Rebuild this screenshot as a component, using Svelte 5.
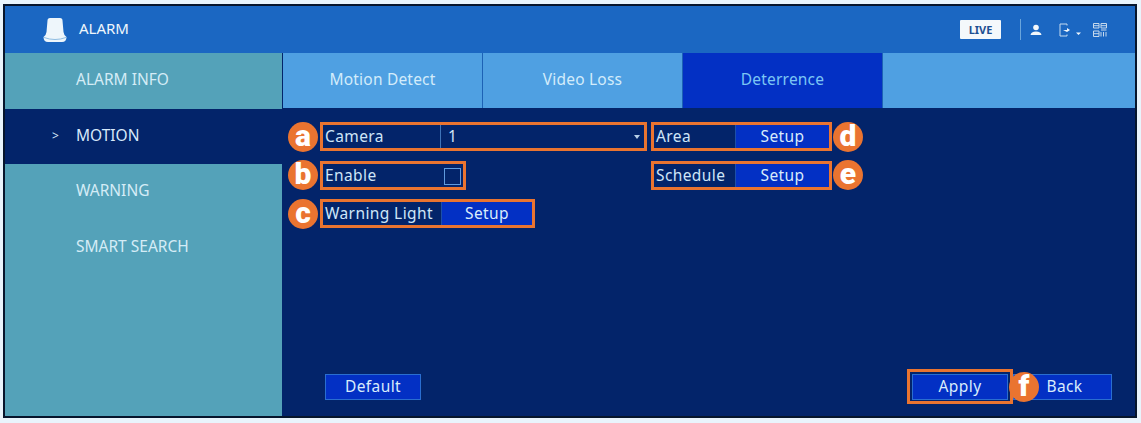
<script>
	const menu = [
		{ label: 'ALARM INFO' },
		{ label: 'MOTION', active: true },
		{ label: 'WARNING' },
		{ label: 'SMART SEARCH' }
	];
	const tabs = [
		{ label: 'Motion Detect' },
		{ label: 'Video Loss' },
		{ label: 'Deterrence', active: true }
	];
</script>

<div class="frame">
	<header class="topbar">
		<div class="brand">
			<svg class="bell" width="24" height="26" viewBox="0 0 24 26">
				<path d="M4.500 3.500 Q4.500 1 7 1 H17 Q19.500 1 19.500 3.500 L20.500 15 Q20.800 18 23.500 20 Q23.500 25 19 25 H5 Q0.500 25 0.500 20 Q3.200 18 3.500 15 Z" fill="#eef6fb" />
				<path d="M1 20.500 Q12 24.500 23 20.500" fill="none" stroke="#8fbde2" stroke-width="1" />
			</svg>
			<span>ALARM</span>
		</div>
		<div class="tools">
			<span class="live">LIVE</span>
			<span class="sep"></span>
			<svg width="12" height="12" viewBox="0 0 12 12">
				<circle cx="6" cy="3.500" r="2.800" fill="#f2f7fb" />
				<path d="M0.500 11 Q1 7.500 6 7.500 Q11 7.500 11.500 11 Z" fill="#f2f7fb" />
			</svg>
			<svg class="exit" width="23" height="14" viewBox="0 0 23 14">
				<path d="M8 2.500 V1 H1 V13 H8 V11.500" fill="none" stroke="#c6dcf0" stroke-width="1" />
				<path d="M4 7 H8 V5 L11 7 L8 9 Z" fill="#f2f7fb" />
				<path d="M17 9.500 H22 L19.500 12 Z" fill="#f2f7fb" />
			</svg>
			<svg class="qr" width="14" height="14" viewBox="0 0 14 14">
				<g fill="none" stroke="#c6d9ec" stroke-width="1">
					<path d="M0.500 0.500 H6 V5 H0.500 Z M8 0.500 H13.500 V5 H8 Z M0.500 8 H6 V13.500 H0.500 Z" />
					<path d="M0.500 2.700 H6 M8 2.700 H13.500 M8 7 H13.500 M8 9 V13.500 M10.500 9 V13.500 M13 9 V13.500 M0.500 10.700 H6" />
				</g>
			</svg>
		</div>
	</header>

	<div class="body">
		<nav class="sidebar">
			{#each menu as item}
				<div class="menu-item" class:active={item.active}>
					{#if item.active}<span class="chevron">&gt;</span>{/if}
					{item.label}
				</div>
			{/each}
		</nav>

		<main class="panel">
			<div class="tabs">
				{#each tabs as tab}
					<div class="tab" class:active={tab.active}>{tab.label}</div>
				{/each}
				<div class="tab filler"></div>
			</div>

			<div class="form">
				<div class="box camera">
					<span class="badge left">a</span>
					<span class="label">Camera</span>
					<span class="select">1<i class="caret"></i></span>
				</div>
				<div class="box area">
					<span class="label">Area</span>
					<span class="setup">Setup</span>
					<span class="badge right">d</span>
				</div>

				<div class="box enable">
					<span class="badge left">b</span>
					<span class="label">Enable</span>
					<span class="check"></span>
				</div>
				<div class="box area">
					<span class="label">Schedule</span>
					<span class="setup">Setup</span>
					<span class="badge right">e</span>
				</div>

				<div class="box light">
					<span class="badge left">c</span>
					<span class="label">Warning Light</span>
					<span class="setup">Setup</span>
				</div>
			</div>

			<div class="actions">
				<button class="btn">Default</button>
				<div class="right-actions">
					<div class="apply-box">
						<button class="btn">Apply</button>
						<span class="badge apply-badge">f</span>
					</div>
					<button class="btn back">Back</button>
				</div>
			</div>
		</main>
	</div>
</div>

<style>
	:global(body) {
		background: #e9f4fc;
	}
	.frame {
		box-sizing: border-box;
		width: 1134px;
		height: 414px;
		margin: 4px 0 0 3px;
		border: 2px solid #06152c;
		display: flex;
		flex-direction: column;
		font-family: 'Noto Sans', 'Open Sans', sans-serif;
		color: #cfe6f8;
		font-size: 15.500px;
		letter-spacing: 0.4px;
	}
	.topbar {
		height: 47px;
		flex: none;
		background: #1b67c2;
		display: flex;
		align-items: center;
		justify-content: space-between;
		padding: 0 28px 0 38px;
	}
	.brand {
		display: flex;
		align-items: center;
		gap: 12px;
		font-size: 15px;
		line-height: 18px;
		color: #f0f7fc;
		letter-spacing: 0;
	}
	.brand span {
		padding-bottom: 3px;
	}
	.tools {
		display: flex;
		align-items: center;
	}
	.live {
		width: 41px;
		height: 19px;
		background: #f4f8fb;
		color: #1c4f92;
		border-radius: 1px;
		font-size: 11px;
		font-weight: 700;
		line-height: 19px;
		text-align: center;
		letter-spacing: 0;
		margin-right: 19px;
	}
	.sep {
		width: 1px;
		height: 21px;
		background: #6aa5dc;
		margin-right: 9px;
	}
	.exit {
		margin-left: 17px;
	}
	.qr {
		margin-left: 11px;
	}
	.body {
		flex: 1;
		display: flex;
		min-height: 0;
	}
	.sidebar {
		width: 277px;
		flex: none;
		background: #54a2b9;
	}
	.menu-item {
		position: relative;
		height: 55.500px;
		line-height: 53px;
		padding-left: 71px;
		font-size: 15.500px;
		color: #d4ecf6;
		letter-spacing: 0;
	}
	.menu-item.active {
		background: #03246a;
		color: #d7e9fa;
	}
	.chevron {
		position: absolute;
		left: 47px;
		font-size: 12px;
	}
	.panel {
		flex: 1;
		background: #03246a;
		display: flex;
		flex-direction: column;
		border-left: 1px solid #03246a;
	}
	.tabs {
		height: 55px;
		flex: none;
		display: flex;
		gap: 1px;
		background: #1d62b5;
	}
	.tab {
		width: 199px;
		background: #4fa0e2;
		color: #d3ecfb;
		text-align: center;
		line-height: 53px;
		font-size: 15.500px;
		letter-spacing: 0.2px;
	}
	.tab.active {
		background: #0330c4;
		color: #7cc6f4;
	}
	.tab.filler {
		flex: 1;
	}
	.form {
		display: grid;
		grid-template-columns: 327px 181px;
		grid-auto-rows: 29px;
		column-gap: 4px;
		row-gap: 9.500px;
		padding: 14px 0 0 37px;
		justify-items: start;
		align-content: start;
		flex: 1;
	}
	.box {
		position: relative;
		box-sizing: border-box;
		height: 29px;
		border: 3px solid #ea7430;
		display: flex;
		align-items: stretch;
		line-height: 23px;
	}
	.camera {
		width: 327px;
	}
	.area {
		width: 181px;
	}
	.enable {
		width: 146px;
		grid-column: 1;
	}
	.light {
		width: 215px;
	}
	.label {
		padding-left: 2px;
		white-space: nowrap;
	}
	.camera .label {
		width: 115px;
		flex: none;
		border-right: 1px solid #3f74b8;
	}
	.area .label {
		width: 79px;
		flex: none;
		border-right: 1px solid #1d4fa8;
	}
	.light .label {
		width: 116px;
		flex: none;
		border-right: 1px solid #1d4fa8;
	}
	.select {
		position: relative;
		flex: 1;
		padding-left: 7px;
	}
	.caret {
		position: absolute;
		right: 4px;
		top: 10px;
		border: 3.500px solid transparent;
		border-top: 4px solid #b7cfe8;
		border-bottom: 0;
	}
	.setup {
		flex: 1;
		background: #0330c4;
		color: #d9ecfb;
		text-align: center;
	}
	.check {
		width: 15px;
		height: 15px;
		border: 1px solid #5f9ade;
		margin: 4px 0 0 auto;
		margin-right: 2px;
	}
	.badge {
		position: absolute;
		top: 50%;
		width: 30px;
		height: 30px;
		margin-top: -15px;
		border-radius: 50%;
		background: #ea7430;
		color: #fff;
		font-family: 'Roboto', 'Liberation Sans', sans-serif;
		font-weight: 900;
		font-size: 30px;
		line-height: 28px;
		text-align: center;
		z-index: 1;
		letter-spacing: 0;
	}
	.badge.left {
		left: -35px;
	}
	.badge.right {
		right: -34px;
	}
	.actions {
		display: flex;
		justify-content: space-between;
		align-items: center;
		padding: 0 23px 16px 42px;
	}
	.right-actions {
		display: flex;
		align-items: center;
	}
	.btn {
		box-sizing: border-box;
		width: 96px;
		height: 26px;
		padding: 0 0 2px;
		background: #0330c4;
		border: 1px solid #2a6ed0;
		color: #d9ecfb;
		font: inherit;
		letter-spacing: 0.4px;
	}
	.apply-box {
		position: relative;
		box-sizing: border-box;
		height: 35px;
		padding: 1.500px 2px;
		margin: -4px 0;
		border: 3px solid #ea7430;
	}
	.apply-badge {
		right: -29px;
		margin-top: -15px;
		top: 50%;
	}
	.back {
		width: 99px;
		padding-left: 4px;
		text-align: center;
	}
</style>
